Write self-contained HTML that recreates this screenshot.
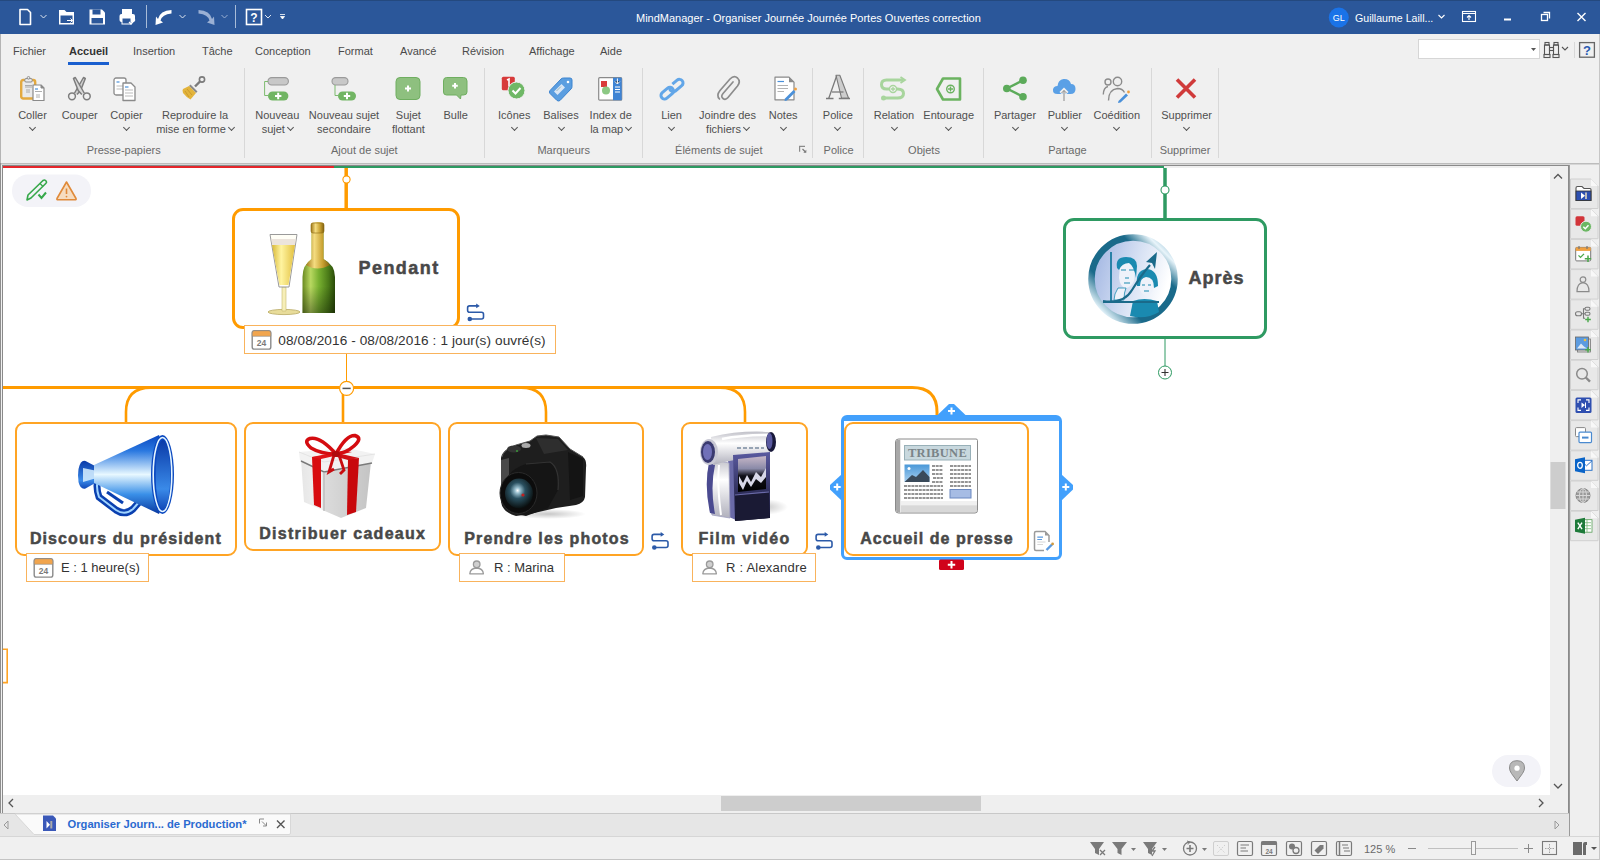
<!DOCTYPE html>
<html><head><meta charset="utf-8">
<style>
*{box-sizing:border-box}
html,body{margin:0;padding:0}
body{width:1600px;height:860px;position:relative;overflow:hidden;background:#f0f0f0;font-family:"Liberation Sans",sans-serif;color:#444}
.a{position:absolute}
svg{position:absolute;overflow:visible}
.tb{position:absolute;left:0;top:0;width:1600px;height:34px;background:#2b579a}
.tab{position:absolute;top:45px;font-size:11px;color:#4a4a4a;white-space:nowrap}
.rl{position:absolute;font-size:11px;color:#4f4f4f;white-space:nowrap;text-align:center;line-height:13.5px}
.gl{position:absolute;top:144px;font-size:11px;color:#6a6a6a;white-space:nowrap;text-align:center}
.sep{position:absolute;top:68px;width:1px;height:90px;background:#d8d8d8}
.chev{display:inline-block;width:5px;height:5px;border-right:1px solid #555;border-bottom:1px solid #555;transform:rotate(45deg);margin-left:3px;position:relative;top:-3px}
.node{position:absolute;background:#fff;border:2px solid #ffa424;border-radius:9px}
.nt{position:absolute;font-weight:bold;font-size:16px;color:#484848;white-space:nowrap;-webkit-text-stroke:0.5px #484848}
.call{position:absolute;background:#fff;border:1px solid #f9b35c;height:29px}
.ct{position:absolute;font-size:13px;color:#333;white-space:nowrap}
</style></head><body>

<!-- TITLE BAR -->
<div class="tb"></div>
<div class="a" style="left:636px;top:11.5px;font-size:11px;color:#fff;white-space:nowrap">MindManager - Organiser Journée Journée Portes Ouvertes correction</div>


<div class="a" style="left:1418px;top:39px;width:122px;height:20px;background:#fff;border:1px solid #d6d6d6"></div>
<!-- TITLE BAR ICONS -->
<svg class="a" style="left:0;top:0" width="1600" height="34" viewBox="0 0 1600 34">
 <rect x="0" y="0" width="1600" height="1" fill="#24497f"/>
 <!-- new -->
 <path d="M20 9.5 H27.5 L30.5 12.5 V24.5 H20 Z" fill="none" stroke="#fff" stroke-width="1.6" stroke-linejoin="round"/>
 <path d="M40.5 15 L43.5 18 L46.5 15" fill="none" stroke="#dfe6f0" stroke-width="1"/>
 <!-- open -->
 <path d="M59 10 H64.5 L66.5 12 H74 V24.5 H59 Z" fill="#fff"/>
 <rect x="60.5" y="15.5" width="12" height="7.5" fill="#2b579a"/>
 <path d="M67 20.5 H72.5 M70.5 18.5 L72.5 20.5 L70.5 22.5" fill="none" stroke="#fff" stroke-width="1"/>
 <!-- save -->
 <path d="M89.5 9.5 H102 L105 12.5 V24.5 H89.5 Z" fill="#fff"/>
 <rect x="92.5" y="9.5" width="8" height="5" fill="#2b579a"/>
 <rect x="91.5" y="18" width="11.5" height="5.5" fill="#2b579a"/>
 <!-- print -->
 <rect x="122" y="9" width="10" height="5" fill="#fff"/>
 <rect x="119.5" y="14" width="15.5" height="8" rx="2" fill="#fff"/>
 <rect x="122" y="18" width="9" height="6" fill="#2b579a" stroke="#fff" stroke-width="1"/>
 <path d="M129 22 L131 24 L135 19.5" fill="none" stroke="#fff" stroke-width="1.3"/>
 <rect x="146" y="5" width="1" height="23" fill="#a8bcd8"/>
 <!-- undo -->
 <path d="M171.5 10 Q160 10.5 158 19 L156 16.5 L155.5 25 L163 22.5 L160.5 20.5 Q162 14.5 171.5 13.5 Z" fill="#fff"/>
 <path d="M179.5 15 L182.5 18 L185.5 15" fill="none" stroke="#dfe6f0" stroke-width="1"/>
 <!-- redo -->
 <path d="M198.5 10 Q210 10.5 212 19 L214 16.5 L214.5 25 L207 22.5 L209.5 20.5 Q208 14.5 198.5 13.5 Z" fill="#9ab0d4"/>
 <path d="M221.5 15 L224.5 18 L227.5 15" fill="none" stroke="#9ab0d4" stroke-width="1"/>
 <rect x="235" y="5" width="1" height="23" fill="#a8bcd8"/>
 <!-- help -->
 <rect x="246.5" y="9.5" width="15" height="15" fill="none" stroke="#fff" stroke-width="1.6"/>
 <text x="254" y="21.5" font-family="Liberation Sans" font-weight="bold" font-size="12" fill="#fff" text-anchor="middle">?</text>
 <path d="M265 15 L268 18 L271 15" fill="none" stroke="#dfe6f0" stroke-width="1"/>
 <path d="M280 14.5 H285 M280.5 16.5 H284.5 L282.5 19 Z" fill="#fff" stroke="#fff" stroke-width="0.8"/>
 <!-- user -->
 <circle cx="1338.8" cy="17.5" r="10" fill="#1a73e8"/>
 <text x="1338.8" y="21" font-family="Liberation Sans" font-size="9" fill="#fff" text-anchor="middle">GL</text>
 <text x="1355" y="22" font-family="Liberation Sans" font-size="10.6" fill="#fff">Guillaume Laill...</text>
 <path d="M1438.5 15 L1441.5 18 L1444.5 15" fill="none" stroke="#fff" stroke-width="1.1"/>
 <rect x="1462.5" y="11.5" width="13" height="10" fill="none" stroke="#fff" stroke-width="1.1"/>
 <path d="M1462.5 13.5 H1475.5" stroke="#fff" stroke-width="1"/>
 <path d="M1469 20 V15.5 M1467 17.5 L1469 15.5 L1471 17.5" fill="none" stroke="#fff" stroke-width="1.1"/>
 <rect x="1504" y="18.5" width="7" height="2" fill="#fff"/>
 <rect x="1541.5" y="14.5" width="6" height="6" fill="none" stroke="#fff" stroke-width="1.3"/>
 <path d="M1543.5 12.5 H1549.5 V18.5" fill="none" stroke="#fff" stroke-width="1.3"/>
 <path d="M1577.5 13 L1585.5 21 M1585.5 13 L1577.5 21" stroke="#fff" stroke-width="1.4"/>
</svg>
<!-- search & help right -->
<svg class="a" style="left:0;top:34px" width="1600" height="30" viewBox="0 34 1600 30">
 <path d="M1531 48 H1536 L1533.5 51 Z" fill="#555"/>
 <g fill="none" stroke="#555" stroke-width="1.1">
  <rect x="1545" y="42.5" width="4" height="2.5"/><rect x="1554" y="42.5" width="4" height="2.5"/>
  <rect x="1544.5" y="45" width="5" height="9.5"/><rect x="1553.5" y="45" width="5" height="9.5"/>
  <rect x="1544" y="54.5" width="6" height="3"/><rect x="1553" y="54.5" width="6" height="3"/>
  <rect x="1549.5" y="47.5" width="4" height="3"/>
 </g>
 <path d="M1562 47 L1565 50 L1568 47" fill="none" stroke="#555" stroke-width="1.1"/>
 <rect x="1574" y="42" width="1" height="16" fill="#d8d8d8"/>
 <rect x="1579.6" y="42.6" width="14.8" height="14.6" fill="none" stroke="#666" stroke-width="1.3"/>
 <text x="1587" y="54.5" font-family="Liberation Sans" font-weight="bold" font-size="13" fill="#2a5ab0" text-anchor="middle">?</text>
</svg>

<!-- TABS -->
<div class="tab" style="left:13px">Fichier</div>
<div class="tab" style="left:69px;font-weight:bold;color:#333">Accueil</div>
<div class="a" style="left:68px;top:62px;width:41px;height:3px;background:#1a5fcf"></div>
<div class="tab" style="left:133px">Insertion</div>
<div class="tab" style="left:202px">Tâche</div>
<div class="tab" style="left:255px">Conception</div>
<div class="tab" style="left:338px">Format</div>
<div class="tab" style="left:400px">Avancé</div>
<div class="tab" style="left:462px">Révision</div>
<div class="tab" style="left:529px">Affichage</div>
<div class="tab" style="left:600px">Aide</div>


<!-- RIBBON LABELS -->
<div class="rl" style="left:-27.5px;top:109px;width:120px">Coller<br><span class="chev" style="margin-left:0"></span></div>
<div class="rl" style="left:19.7px;top:109px;width:120px">Couper</div>
<div class="rl" style="left:66.5px;top:109px;width:120px">Copier<br><span class="chev" style="margin-left:0"></span></div>
<div class="rl" style="left:135.0px;top:109px;width:120px">Reproduire la<br>mise en forme<span class="chev"></span></div>
<div class="rl" style="left:217.3px;top:109px;width:120px">Nouveau<br>sujet<span class="chev"></span></div>
<div class="rl" style="left:284.0px;top:109px;width:120px">Nouveau sujet<br>secondaire</div>
<div class="rl" style="left:348.4px;top:109px;width:120px">Sujet<br>flottant</div>
<div class="rl" style="left:395.7px;top:109px;width:120px">Bulle</div>
<div class="rl" style="left:454.2px;top:109px;width:120px">Icônes<br><span class="chev" style="margin-left:0"></span></div>
<div class="rl" style="left:501.0px;top:109px;width:120px">Balises<br><span class="chev" style="margin-left:0"></span></div>
<div class="rl" style="left:550.7px;top:109px;width:120px">Index de<br>la map<span class="chev"></span></div>
<div class="rl" style="left:611.6px;top:109px;width:120px">Lien<br><span class="chev" style="margin-left:0"></span></div>
<div class="rl" style="left:667.5px;top:109px;width:120px">Joindre des<br>fichiers<span class="chev"></span></div>
<div class="rl" style="left:723.2px;top:109px;width:120px">Notes<br><span class="chev" style="margin-left:0"></span></div>
<div class="rl" style="left:777.8px;top:109px;width:120px">Police<br><span class="chev" style="margin-left:0"></span></div>
<div class="rl" style="left:834.0px;top:109px;width:120px">Relation<br><span class="chev" style="margin-left:0"></span></div>
<div class="rl" style="left:888.7px;top:109px;width:120px">Entourage<br><span class="chev" style="margin-left:0"></span></div>
<div class="rl" style="left:955.0px;top:109px;width:120px">Partager<br><span class="chev" style="margin-left:0"></span></div>
<div class="rl" style="left:1004.8px;top:109px;width:120px">Publier<br><span class="chev" style="margin-left:0"></span></div>
<div class="rl" style="left:1056.8px;top:109px;width:120px">Coédition<br><span class="chev" style="margin-left:0"></span></div>
<div class="rl" style="left:1126.6px;top:109px;width:120px">Supprimer<br><span class="chev" style="margin-left:0"></span></div>
<div class="gl" style="left:63.7px;width:120px">Presse-papiers</div>
<div class="gl" style="left:304.3px;width:120px">Ajout de sujet</div>
<div class="gl" style="left:503.7px;width:120px">Marqueurs</div>
<div class="gl" style="left:658.8px;width:120px">Éléments de sujet</div>
<div class="gl" style="left:778.6px;width:120px">Police</div>
<div class="gl" style="left:864.0px;width:120px">Objets</div>
<div class="gl" style="left:1007.4px;width:120px">Partage</div>
<div class="gl" style="left:1125.0px;width:120px">Supprimer</div>
<div class="sep" style="left:244px"></div>
<div class="sep" style="left:484px"></div>
<div class="sep" style="left:642px"></div>
<div class="sep" style="left:812px"></div>
<div class="sep" style="left:863px"></div>
<div class="sep" style="left:983px"></div>
<div class="sep" style="left:1151px"></div>
<div class="sep" style="left:1218px"></div>

<!-- RIBBON ICONS -->
<svg class="a" style="left:0;top:0" width="1600" height="170" viewBox="0 0 1600 170">
 <!-- Coller -->
 <g transform="translate(20,77)">
  <rect x="1.2" y="3" width="14" height="18.5" rx="2" fill="#eaeaea" stroke="#e3a93f" stroke-width="2.4"/>
  <rect x="4.8" y="1.6" width="7.4" height="3.4" rx="1.2" fill="#ececec" stroke="#8a8a8a" stroke-width="1"/><circle cx="8.5" cy="0.8" r="1.3" fill="#ececec" stroke="#8a8a8a" stroke-width="0.9"/>
  <path d="M5 8.5H12 M5 10H12 M6 13H10 M6 15H10" stroke="#9a9a9a" stroke-width="0.8"/>
  <path d="M13 8 H21 L24 11 V23.5 H13 Z" fill="#fff" stroke="#8a8a8a" stroke-width="1.2" stroke-linejoin="round"/>
  <path d="M21 8 V11 H24" fill="#8a8a8a" stroke="#8a8a8a" stroke-width="1"/>
  <path d="M15 12H18" stroke="#4a90d9" stroke-width="1.2"/>
  <path d="M15 14.5H22 M16 18H20 M16 20H20" stroke="#9a9a9a" stroke-width="0.8"/>
 </g>
 <!-- Couper -->
 <g fill="none" stroke="#7d7d7d" stroke-width="1.5">
  <circle cx="72" cy="96.3" r="3.4"/><circle cx="86.8" cy="96.3" r="3.4"/>
  <path d="M74.3 93.5 L83.5 77.5 L85.3 78.5 L80.6 90.5 L77 94.5" fill="#d0d0d0" stroke-linejoin="round"/>
  <path d="M84.5 93.5 L75.3 77.5 L73.5 78.5 L78.2 90.5 L81.8 94.5" fill="#d8d8d8" stroke-linejoin="round"/>
 </g>
 <!-- Copier -->
 <g transform="translate(113,77)">
  <rect x="1" y="1" width="12" height="17" rx="2" fill="#fff" stroke="#8a8a8a" stroke-width="1.3"/>
  <path d="M3.5 5H6.5" stroke="#4a90d9" stroke-width="1.2"/><path d="M3.5 9H10 M3.5 12H10" stroke="#aaa" stroke-width="0.8"/>
  <path d="M10 6 H18 L22 10 V23.5 H10 Z" fill="#fff" stroke="#8a8a8a" stroke-width="1.3" stroke-linejoin="round"/>
  <path d="M12 10H15.5" stroke="#4a90d9" stroke-width="1.2"/><path d="M12 13H20 M12 16H20 M12 19H20" stroke="#aaa" stroke-width="0.8"/>
 </g>
 <!-- Reproduire -->
 <g transform="translate(181,76)">
  <circle cx="21" cy="3.5" r="2.6" fill="none" stroke="#7b7b7b" stroke-width="1.6"/>
  <path d="M19 5.5 L14 10.5" stroke="#7b7b7b" stroke-width="2.4"/>
  <path d="M9.5 8.5 L16.5 15.5 L15 17 L8 10 Z" fill="#8a8a8a"/>
  <path d="M8 10 L15 17 L9.5 23.5 Q5 21 2 17 Q1 14 2 13 Z" fill="#e3b43b"/>
  <path d="M4 15 L8 21 M6 13 L11 19" stroke="#c4932a" stroke-width="0.8"/>
 </g>
 <!-- Nouveau sujet -->
 <g transform="translate(264,77)">
  <rect x="4" y="0.6" width="20.4" height="7.4" rx="3.7" fill="#c8c8c8" stroke="#9a9a9a" stroke-width="1.1"/>
  <path d="M4 4.5 H0.6 V18.5 H4" fill="none" stroke="#7dbb6f" stroke-width="1"/>
  <rect x="4" y="14.4" width="20.4" height="9.2" rx="4.6" fill="#71b563"/>
  <path d="M14.2 15.8 V22.2 M11 19 H17.4" stroke="#fff" stroke-width="2"/>
 </g>
 <!-- Nouveau sujet secondaire -->
 <g transform="translate(331,77)">
  <rect x="1" y="0.6" width="16" height="7.4" rx="3.7" fill="#c8c8c8" stroke="#9a9a9a" stroke-width="1.1"/>
  <path d="M4 8 V18.5 H7" fill="none" stroke="#7dbb6f" stroke-width="1"/>
  <rect x="7" y="14.4" width="18" height="9.2" rx="4.6" fill="#71b563"/>
  <path d="M16 15.8 V22.2 M12.8 19 H19.2" stroke="#fff" stroke-width="2"/>
 </g>
 <!-- Sujet flottant -->
 <g transform="translate(395.5,77)">
  <rect x="0.5" y="0.5" width="24" height="22" rx="4" fill="#8ec07f" stroke="#6fae60" stroke-width="1"/>
  <path d="M12.5 8.5 V14.5 M9.5 11.5 H15.5" stroke="#fff" stroke-width="2"/>
 </g>
 <!-- Bulle -->
 <g transform="translate(443,77)">
  <path d="M3.5 0.5 H20.5 Q24 0.5 24 4 V15 Q24 18 20.5 18 H18 L17.5 22 L13.5 18 H3.5 Q0.5 18 0.5 15 V4 Q0.5 0.5 3.5 0.5 Z" fill="#8ec07f" stroke="#6fae60" stroke-width="1"/>
  <path d="M12 6 V11.5 M9.2 8.8 H14.8" stroke="#fff" stroke-width="2"/>
 </g>
 <!-- Icones -->
 <g transform="translate(501.5,76.5)">
  <rect x="0.3" y="0.3" width="13" height="13.5" rx="1.5" fill="#d73a3a"/>
  <path d="M5.5 3.5 L7.5 2.5 V10" stroke="#fff" stroke-width="1.6" fill="none"/>
  <circle cx="15" cy="14" r="8.5" fill="#6fb866" stroke="#f0f0f0" stroke-width="1"/>
  <path d="M11 14 L14 17 L19 11.5" stroke="#fff" stroke-width="2" fill="none"/>
 </g>
 <!-- Balises -->
 <g transform="translate(548,76.5)">
  <path d="M2 14 L13 2.5 Q14 1.5 15.5 1.5 L22 1.5 Q24 1.5 24 3.5 L24 10 Q24 11.5 23 12.5 L12 24 Q10.5 25 9 24 L2 17 Q0.8 15.5 2 14 Z" fill="#5b9ee0" stroke="#3d84cf" stroke-width="1"/>
  <path d="M6 15 L13.5 7.5 L17 11 L9.5 18.5 Z" fill="#d9e6f5"/>
  <path d="M8.5 14.5 L13 10" stroke="#8aa" stroke-width="0.8"/>
  <circle cx="20" cy="5.5" r="1.3" fill="#fff"/>
 </g>
 <!-- Index map -->
 <g transform="translate(598,77)">
  <rect x="0.7" y="0.7" width="23" height="22.5" rx="1" fill="#fff" stroke="#8a8a8a" stroke-width="1.2"/>
  <rect x="15" y="0.7" width="8.7" height="22.5" fill="#3f84d4"/>
  <rect x="3" y="4" width="6" height="6" fill="#d93b3b"/>
  <circle cx="8" cy="13.5" r="4" fill="#8cc884"/>
  <path d="M19.4 1.5 V7 M17 4.5 L19.4 7 L21.8 4.5 M17 10H22 M17 12.5H22 M17 15H22" stroke="#fff" stroke-width="1"/>
 </g>
 <!-- Lien -->
 <g transform="translate(672,89.2) rotate(-40)" fill="none" stroke="#62a6e8" stroke-width="3">
  <rect x="-13.3" y="-3.6" width="14.2" height="7.2" rx="3.6"/>
  <path d="M3.5 -3.6 H9.7 A3.6 3.6 0 0 1 9.7 3.6 H1.5 A3.6 3.6 0 0 1 -0.9 -2.4"/>
 </g>
 <!-- Joindre -->
 <g transform="translate(716,76)" fill="none" stroke="#8c8c8c" stroke-width="1.7" stroke-linecap="round">
  <path d="M17 6 L7 17.5 Q4.5 20.5 7 22.5 Q9.5 24.5 12 21.5 L21.5 10 Q25 5.5 21.5 2 Q18 -1 14 3 L4 14.5 Q0 19.5 3.5 23"/>
 </g>
 <!-- Notes -->
 <g transform="translate(774,76.5)">
  <path d="M1 0.7 H15 L20 5.7 V23.3 H1 Z" fill="#fff" stroke="#8a8a8a" stroke-width="1.2" stroke-linejoin="round"/>
  <path d="M15 0.7 V5.7 H20" fill="#8a8a8a"/>
  <path d="M3.5 5 H10" stroke="#4a90d9" stroke-width="1.2"/>
  <path d="M3.5 9 H14 M3.5 12 H14 M3.5 15 H10" stroke="#aaa" stroke-width="0.9"/>
  <path d="M11 22 L19.5 13.5 L21.5 15.5 L13 24 L10.5 24.5 Z" fill="#4a90d9"/>
  <circle cx="21.5" cy="12.5" r="1.5" fill="#f0a040"/>
 </g>
 <!-- Police -->
 <g>
  <path d="M836 75.3 H839.8 L848.6 98.3 H841.6 Z" fill="#cdcdcd" stroke="#7a7a7a" stroke-width="1.1" stroke-linejoin="round"/>
  <path d="M836.6 76 L828.8 98.3" stroke="#7a7a7a" stroke-width="1.3"/>
  <path d="M832 92 H843.5" stroke="#7a7a7a" stroke-width="1.3"/>
  <path d="M826 98.5 H833.5 M838.8 98.5 H850" stroke="#7a7a7a" stroke-width="1.6"/>
 </g>
 <!-- Relation -->
 <g transform="translate(879.5,77)" fill="none" stroke="#a8d59d" stroke-width="3">
  <path d="M24 3 H7 Q2 3 2 7.5 Q2 12 7 12 H18 Q24 12 24 16.5 Q24 21 18 21 H5"/>
  <path d="M21 0 L25.5 3 L21 6" stroke-width="1.8"/>
  <circle cx="4" cy="21" r="2.5" fill="#a8d59d" stroke="none"/>
  <circle cx="13.5" cy="12" r="3.5" fill="#f0f0f0" stroke="#a8d59d" stroke-width="1.4"/>
  <path d="M13.5 10 V14 M11.5 12 H15.5" stroke="#a8d59d" stroke-width="1.3"/>
 </g>
 <!-- Entourage -->
 <g transform="translate(935.5,77)">
  <path d="M7.5 1.5 H24.5 V22.5 H7.5 L1.5 12 Z" fill="none" stroke="#6bb360" stroke-width="2.6" stroke-linejoin="round"/>
  <circle cx="15" cy="12" r="3.8" fill="none" stroke="#6bb360" stroke-width="1.4"/>
  <path d="M15 9.5 V14.5 M12.5 12 H17.5" stroke="#6bb360" stroke-width="1.4"/>
 </g>
 <!-- Partager -->
 <g transform="translate(1003,76.5)" fill="#5cab5a">
  <circle cx="3.8" cy="12" r="3.8"/><circle cx="20" cy="3.8" r="3.8"/><circle cx="20" cy="20.2" r="3.8"/>
  <path d="M3.8 12 L20 3.8 M3.8 12 L20 20.2" stroke="#5cab5a" stroke-width="2.4"/>
 </g>
 <!-- Publier -->
 <g transform="translate(1052.5,77)">
  <path d="M5 17 Q0 17 0.5 12.5 Q1 9 5 9 Q5.5 3 11 2 Q17 1.5 18.5 7 Q23 7 23 12 Q23 17 18 17 Z" fill="#5aa0e6"/>
  <path d="M11.5 25 V13 M8 16 L11.5 12.5 L15 16" fill="none" stroke="#f0f0f0" stroke-width="3"/>
  <path d="M11.5 24 V13.5 M9 16 L11.5 13.5 L14 16" fill="none" stroke="#888" stroke-width="1"/>
 </g>
 <!-- Coedition -->
 <g transform="translate(1102.5,76.5)" fill="none" stroke="#8c8c8c" stroke-width="1.4">
  <circle cx="5.5" cy="5.5" r="3"/><circle cx="15" cy="5" r="4.2"/>
  <path d="M0.8 18 Q1 11 5.5 10"/><path d="M6 24 Q6 13 15 12 Q20 12 22 16"/>
  <path d="M16 24.5 L23.5 17 L25.5 19 L18 26 L15.5 26.5 Z" fill="#4a90d9" stroke="none"/>
  <circle cx="26" cy="15.5" r="1.4" fill="#f0a040" stroke="none"/>
 </g>
 <!-- Supprimer -->
 <g transform="translate(1175.5,78)" stroke="#d03a3a" stroke-width="3.6" stroke-linecap="butt">
  <path d="M1.5 1.5 L19.5 19.5 M19.5 1.5 L1.5 19.5"/>
 </g>
 <!-- launcher -->
 <path d="M805 146.3 H799.6 V151.8" fill="none" stroke="#8a8a8a" stroke-width="1.2"/>
 <path d="M802.5 149 L805.5 152" stroke="#7a7a7a" stroke-width="1.3"/>
 <path d="M806.3 149.8 V152.8 H803.3 Z" fill="#7a7a7a"/>
</svg>
<!-- search box -->


<!-- RIBBON bottom border -->
<div class="a" style="left:0;top:163px;width:1600px;height:1px;background:#bcbcbc"></div><div class="a" style="left:0;top:164px;width:1600px;height:1px;background:#d6d6d6"></div>
<div class="a" style="left:0;top:34px;width:1px;height:129px;background:#b4b4b4"></div><div class="a" style="left:0;top:163px;width:1px;height:650px;background:#8e8e8e"></div>

<!-- CANVAS -->
<div class="a" style="left:2px;top:165px;width:1567px;height:649px;background:#8a8a8a"></div>
<div class="a" style="left:3px;top:166px;width:1565px;height:647px;background:#efefef"></div>
<div class="a" id="canvas" style="left:3px;top:168px;width:1547px;height:627px;background:#fff;overflow:hidden"></div>


<!-- CANVAS CONTENT -->
<svg class="a" style="left:0;top:0" width="1600" height="860" viewBox="0 0 1600 860">
 <defs>
  <linearGradient id="gGlass" x1="0" x2="1"><stop offset="0" stop-color="#e9d36a"/><stop offset="0.45" stop-color="#fff7b8"/><stop offset="1" stop-color="#d9b93a"/></linearGradient>
  <linearGradient id="gBottle" x1="0" x2="1"><stop offset="0" stop-color="#2f5a14"/><stop offset="0.35" stop-color="#9cc450"/><stop offset="0.6" stop-color="#5e8f22"/><stop offset="1" stop-color="#2a4a10"/></linearGradient>
  <linearGradient id="gFoil" x1="0" x2="1"><stop offset="0" stop-color="#8a6a20"/><stop offset="0.4" stop-color="#f0d27a"/><stop offset="1" stop-color="#7a5a18"/></linearGradient>
  <linearGradient id="gCone" x1="0" y1="0" x2="0" y2="1"><stop offset="0" stop-color="#0a4fc0"/><stop offset="0.45" stop-color="#e6f4ff"/><stop offset="0.75" stop-color="#4aa0f0"/><stop offset="1" stop-color="#0a3fa0"/></linearGradient>
  <radialGradient id="gMouth" cx="0.5" cy="0.5" r="0.5"><stop offset="0" stop-color="#3a8ae6"/><stop offset="1" stop-color="#0a3a9a"/></radialGradient>
  <linearGradient id="gBox" x1="0" x2="1"><stop offset="0" stop-color="#d8d8d8"/><stop offset="0.5" stop-color="#f4f4f4"/><stop offset="1" stop-color="#c8c8c8"/></linearGradient>
  <radialGradient id="gLens" cx="0.4" cy="0.4" r="0.6"><stop offset="0" stop-color="#9fc6d8"/><stop offset="0.4" stop-color="#2a5a6a"/><stop offset="1" stop-color="#0a1418"/></radialGradient>
  <linearGradient id="gCam" x1="0" x2="1"><stop offset="0" stop-color="#3a3a3a"/><stop offset="0.5" stop-color="#1a1a1a"/><stop offset="1" stop-color="#0a0a0a"/></linearGradient>
  <linearGradient id="gSilver" x1="0" y1="0" x2="0" y2="1"><stop offset="0" stop-color="#b8b8c0"/><stop offset="0.4" stop-color="#ffffff"/><stop offset="1" stop-color="#a0a0aa"/></linearGradient>
  <linearGradient id="gPurple" x1="0" y1="0" x2="0" y2="1"><stop offset="0" stop-color="#6a6aa8"/><stop offset="1" stop-color="#1a1a40"/></linearGradient>
  <linearGradient id="gPaper" x1="0" y1="0" x2="0" y2="1"><stop offset="0" stop-color="#ffffff"/><stop offset="0.85" stop-color="#f4f4f4"/><stop offset="1" stop-color="#b8b8b8"/></linearGradient>
  <radialGradient id="gApres" cx="0.65" cy="0.35" r="0.7"><stop offset="0" stop-color="#ffffff"/><stop offset="0.5" stop-color="#c6d8f0"/><stop offset="1" stop-color="#8aaee0"/></radialGradient>
  <linearGradient id="gRing" x1="0" y1="0" x2="1" y2="1"><stop offset="0" stop-color="#1a6a90"/><stop offset="0.35" stop-color="#2a7aa0"/><stop offset="0.55" stop-color="#e8f4ff"/><stop offset="0.8" stop-color="#1a6a90"/><stop offset="1" stop-color="#0a4a70"/></linearGradient>
 </defs>

 <!-- top lines -->
 <rect x="3" y="166" width="331" height="2" fill="#e4262b"/>
 <rect x="334" y="166" width="830" height="2" fill="#2e9a62"/>

 <!-- Pendant connector -->
 <path d="M346.2 168 V209" stroke="#ff9b00" stroke-width="3.5"/>
 <circle cx="346.5" cy="179.5" r="3.6" fill="#fff" stroke="#ff9b00" stroke-width="1.1"/>
 <path d="M346.5 354 V381" stroke="#ff9b00" stroke-width="1"/>

 <!-- Apres connector -->
 <path d="M1165 168 V220" stroke="#2e9a62" stroke-width="3.5"/>
 <circle cx="1165" cy="190" r="4" fill="#fff" stroke="#2e9a62" stroke-width="1.1"/>
 <path d="M1165 339 V366" stroke="#2e9a62" stroke-width="1"/>
 <circle cx="1165" cy="372.5" r="6.5" fill="#fff" stroke="#2e9a62" stroke-width="1"/>
 <path d="M1165 369 V376 M1161.5 372.5 H1168.5" stroke="#333" stroke-width="1.1"/>

 <!-- main horizontal -->
 <path d="M3 387.6 H912 Q937 387.6 937 412 V416" fill="none" stroke="#ff9b00" stroke-width="3"/>
 <path d="M151 387.6 Q126 387.6 126 412 V423" fill="none" stroke="#ff9b00" stroke-width="2.6"/>
 <path d="M521 387.6 Q546 387.6 546 412 V423" fill="none" stroke="#ff9b00" stroke-width="2.6"/>
 <path d="M720 387.6 Q745 387.6 745 412 V423" fill="none" stroke="#ff9b00" stroke-width="2.6"/>
 <path d="M343 392 V423" stroke="#ff9b00" stroke-width="2.6"/>
 <circle cx="346.6" cy="388.4" r="7" fill="#fff" stroke="#ff9b00" stroke-width="1.2"/>
 <path d="M342.5 388.4 H350.7" stroke="#555" stroke-width="1.5"/>

 <!-- left offscreen node edge -->
 <path d="M3 649.2 H7.2 V682.6 H3" fill="none" stroke="#ffa424" stroke-width="1.6"/>
</svg>

<!-- NODES -->
<div class="node" style="left:232px;top:208px;width:228px;height:121px;border-width:3px;border-radius:11px;border-color:#ff9b00"></div>
<div class="node" style="left:1063px;top:218px;width:204px;height:121px;border-width:3px;border-radius:11px;border-color:#2e9a62"></div>
<div class="node" style="left:15px;top:422px;width:222px;height:134px"></div>
<div class="node" style="left:244px;top:422px;width:197px;height:129px"></div>
<div class="node" style="left:448px;top:422px;width:196px;height:134px"></div>
<div class="node" style="left:681px;top:422px;width:127px;height:134px"></div>
<!-- selection frame -->
<div class="a" style="left:841px;top:414.5px;width:221px;height:145px;border:3px solid #42a0fc;border-top-width:6px;border-radius:6px"></div>
<div class="node" style="left:844px;top:421.5px;width:185px;height:134.5px"></div>

<div class="nt" style="left:358.5px;top:258.4px;font-size:18px;letter-spacing:1.45px">Pendant</div>
<div class="nt" style="left:1188.6px;top:268.3px;font-size:18px;letter-spacing:1.0px">Après</div>
<div class="nt" style="left:29.9px;top:530.3px;letter-spacing:1.1px">Discours du président</div>
<div class="nt" style="left:259.3px;top:524.6px;letter-spacing:1.27px">Distribuer cadeaux</div>
<div class="nt" style="left:464.2px;top:529.6px;letter-spacing:1.15px">Prendre les photos</div>
<div class="nt" style="left:698.5px;top:529.6px;letter-spacing:1.3px">Film vidéo</div>
<div class="nt" style="left:860.2px;top:529.7px;letter-spacing:1.02px">Accueil de presse</div>


<!-- NODE IMAGES -->
<svg class="a" style="left:0;top:0" width="1600" height="860" viewBox="0 0 1600 860">
 <defs>
  <linearGradient id="gGl" x1="0" x2="1"><stop offset="0" stop-color="#d8b838"/><stop offset="0.4" stop-color="#fff4a0"/><stop offset="1" stop-color="#e2c040"/></linearGradient>
  <linearGradient id="gBt" x1="0" x2="1"><stop offset="0" stop-color="#6a8a20"/><stop offset="0.25" stop-color="#b8d860"/><stop offset="0.5" stop-color="#78b030"/><stop offset="0.8" stop-color="#4a7a18"/><stop offset="1" stop-color="#2a4a08"/></linearGradient>
  <linearGradient id="gBtV" x1="0" y1="0" x2="0" y2="1"><stop offset="0" stop-color="#000" stop-opacity="0"/><stop offset="0.7" stop-color="#000" stop-opacity="0"/><stop offset="1" stop-color="#000" stop-opacity="0.35"/></linearGradient>
  <linearGradient id="gFl" x1="0" x2="1"><stop offset="0" stop-color="#a07818"/><stop offset="0.35" stop-color="#f4dc80"/><stop offset="0.7" stop-color="#c8a030"/><stop offset="1" stop-color="#806010"/></linearGradient>
  <linearGradient id="gCn" x1="0" y1="0" x2="0" y2="1"><stop offset="0" stop-color="#0a48c0"/><stop offset="0.2" stop-color="#2a78e0"/><stop offset="0.5" stop-color="#e8f8ff"/><stop offset="0.75" stop-color="#3a90e8"/><stop offset="1" stop-color="#0838a0"/></linearGradient>
  <linearGradient id="gMo" x1="0" y1="0" x2="0" y2="1"><stop offset="0" stop-color="#0a3aa8"/><stop offset="0.7" stop-color="#3a8ae8"/><stop offset="1" stop-color="#1048b8"/></linearGradient>
  <linearGradient id="gBx" x1="0" x2="1"><stop offset="0" stop-color="#e6e6e6"/><stop offset="0.3" stop-color="#f2f2f2"/><stop offset="0.32" stop-color="#dcdcdc"/><stop offset="1" stop-color="#c4c4c4"/></linearGradient>
  <radialGradient id="gLn" cx="0.45" cy="0.4" r="0.6"><stop offset="0" stop-color="#ffffff"/><stop offset="0.15" stop-color="#9ac0d0"/><stop offset="0.45" stop-color="#2a5060"/><stop offset="1" stop-color="#0a1010"/></radialGradient>
  <linearGradient id="gSv" x1="0" y1="0" x2="0" y2="1"><stop offset="0" stop-color="#c0c0c8"/><stop offset="0.35" stop-color="#ffffff"/><stop offset="1" stop-color="#b0b0bc"/></linearGradient>
  <linearGradient id="gPu" x1="0" y1="0" x2="0" y2="1"><stop offset="0" stop-color="#5a5aa0"/><stop offset="1" stop-color="#10102a"/></linearGradient>
  <linearGradient id="gSc" x1="0" y1="0" x2="0" y2="1"><stop offset="0" stop-color="#c8b8c8"/><stop offset="0.35" stop-color="#8a8aa8"/><stop offset="0.55" stop-color="#101018"/><stop offset="1" stop-color="#000"/></linearGradient>
  <linearGradient id="gPp" x1="0" y1="0" x2="0" y2="1"><stop offset="0" stop-color="#fff"/><stop offset="0.82" stop-color="#f6f6f6"/><stop offset="1" stop-color="#9a9a9a"/></linearGradient>
  <linearGradient id="gSky" x1="0" y1="0" x2="0" y2="1"><stop offset="0" stop-color="#4a98d8"/><stop offset="1" stop-color="#a8d0f0"/></linearGradient>
  <linearGradient id="gIn" x1="0" y1="0" x2="1" y2="0.3"><stop offset="0" stop-color="#9ab0e0"/><stop offset="0.6" stop-color="#d8e2f4"/><stop offset="1" stop-color="#ffffff"/></linearGradient>
  <linearGradient id="gRg" x1="0" y1="1" x2="1" y2="0"><stop offset="0" stop-color="#2a7a98"/><stop offset="0.12" stop-color="#e0f0f8"/><stop offset="0.3" stop-color="#1a6a8a"/><stop offset="0.7" stop-color="#1a6a8a"/><stop offset="0.85" stop-color="#e8f4fa"/><stop offset="1" stop-color="#5a9ab8"/></linearGradient>
  <radialGradient id="gShd" cx="0.5" cy="0.5" r="0.5"><stop offset="0" stop-color="#000" stop-opacity="0.22"/><stop offset="1" stop-color="#000" stop-opacity="0"/></radialGradient>
 </defs>

 <!-- champagne -->
 <g transform="translate(260,215)">
  <ellipse cx="24" cy="97" rx="16" ry="2.6" fill="#e8dc9a" stroke="#b8a860" stroke-width="0.8"/>
  <path d="M22 72 H26 V96 H22 Z" fill="#f6eeb8" stroke="#c8b870" stroke-width="0.6"/>
  <path d="M10 19.5 H37 L29 72 H19 Z" fill="#fffef6" stroke="#9a9a9a" stroke-width="1"/>
  <path d="M12 30 H35 L28.5 70 H19.5 Z" fill="url(#gGl)"/>
  <path d="M11.5 24 H35.5 L35 30 H12 Z" fill="#ece4dc"/>
  <!-- bottle -->
  <path d="M51.5 9 H63.5 V44 Q75 50 75 62 V98 H42.5 V62 Q42.5 50 51.5 44 Z" fill="url(#gBt)"/>
  <path d="M51.5 9 H63.5 V44 Q75 50 75 62 V98 H42.5 V62 Q42.5 50 51.5 44 Z" fill="url(#gBtV)"/>
  <path d="M51.5 8 Q57.5 6 63.5 8 V44 Q68 47 70 50 Q57 57 46 50 Q48 47 51.5 44 Z" fill="url(#gFl)"/>
  <rect x="51" y="8" width="13" height="10" rx="2" fill="url(#gFl)" stroke="#8a6a10" stroke-width="0.6"/>
 </g>

 <!-- megaphone -->
 <g transform="translate(70,428)">
  <path d="M29 47 Q25 58 29 69 L46 82 Q55 88 63 81 L70 73" fill="none" stroke="#0a40b0" stroke-width="7"/>
  <path d="M29 47 Q25 58 29 69 L46 82 Q55 88 63 81 L70 73" fill="none" stroke="#a0d4ff" stroke-width="2"/>
  <path d="M37 64 L53 75" stroke="#0a40b0" stroke-width="3"/>
  <path d="M8.5 41 Q7.5 47 8.5 54 Q10.5 62 15.5 60.5 L27 54 V39 L15.5 33 Q10.5 31.5 8.5 41 Z" fill="url(#gMo)"/>
  <path d="M13 40 L25 42.5 V50.5 L13 54 Z" fill="#d8f0ff" opacity="0.85"/>
  <path d="M24 37 L89 7 Q106 46 89 86 L24 55 Z" fill="url(#gCn)"/>
  <ellipse cx="92.5" cy="46.5" rx="11.5" ry="39.5" fill="#0a48c0"/>
  <ellipse cx="92.5" cy="46.5" rx="9.3" ry="37" fill="none" stroke="#e6f6ff" stroke-width="1.6"/>
  <ellipse cx="93" cy="47" rx="7.3" ry="35" fill="url(#gMo)"/>
 </g>

 <!-- gift -->
 <g transform="translate(290,428)">
  <path d="M11 31 L34 43 L81 34 L76 80 L51 90 L14 74 Z" fill="url(#gBx)"/>
  <path d="M9 24 L57 20 L85 26 L82 35 L34 44 L10 33 Z" fill="#f2f2f2"/>
  <path d="M9 24 L34 34 L85 26" fill="none" stroke="#e0e0e0" stroke-width="0.8"/>
  <path d="M11 33 L34 44 L82 35" fill="none" stroke="#7a7a7a" stroke-width="1.4"/>
  <path d="M34 44 V83" stroke="#b0b0b0" stroke-width="1"/>
  <path d="M22 29 L31 28 L31 80 L24 77 Z" fill="#d80c10"/>
  <path d="M58 31 L69 30 L66 84 L57 87 Z" fill="#c8080c"/>
  <path d="M22 29 L52 23 L62 24 L31 31 Z" fill="#e01418"/>
  <path d="M47 25 L69 30 L58 32 L40 27 Z" fill="#d01014"/>
  <path d="M46 26 Q30 8 20 10.5 Q13 13 21 20 Q31 26 46 26 Z" fill="none" stroke="#d40c10" stroke-width="3.6"/>
  <path d="M46 26 Q56 7 65 7.5 Q73 10 64 18 Q56 25 46 26 Z" fill="none" stroke="#d40c10" stroke-width="3.6"/>
  <path d="M44 27 L39 44 L44 41 M49 27 L54 42 L50 46" fill="none" stroke="#c80c10" stroke-width="2.8"/>
  <ellipse cx="46" cy="26" rx="4" ry="3" fill="#b00a0c"/>
 </g>

 <!-- camera -->
 <g transform="translate(490,428)">
  <ellipse cx="58" cy="86" rx="38" ry="5" fill="url(#gShd)"/>
  <path d="M11 30 Q12 22 26 17 L40 13 L47 8 L56 7 L69 9 L80 21 L93 29 Q97 32 96 40 L95 69 Q94 75 86 77 L66 80 L40 86 L26 88 Q12 84 11 74 Z" fill="#1e1e1e"/>
  <path d="M12 29 Q13 22 26 17 L40 13 L47 8 L56 7 L69 9 L80 21 L93 29" fill="none" stroke="#555" stroke-width="1"/>
  <path d="M46 10 L68 11 L78 22 L54 26 Z" fill="#2e2e2e"/>
  <path d="M11 32 L19 30 V70 L11 68 Z" fill="#4a4a4a"/>
  <path d="M78 24 L93 31 V68 L80 72 Z" fill="#141414"/>
  <ellipse cx="36" cy="17.5" rx="4.5" ry="2.5" fill="#aaa"/>
  <ellipse cx="24" cy="21" rx="7" ry="3.5" fill="#333"/>
  <ellipse cx="27" cy="23" r="1" rx="1" ry="1" fill="#3a9a3a"/>
  <path d="M14 60 Q16 42 36 36 L60 34 Q70 40 68 62 L58 80 L36 88 Q18 86 14 70 Z" fill="#151515"/>
  <path d="M36 36 L60 34 Q70 40 68 62" fill="none" stroke="#333" stroke-width="1.2"/>
  <ellipse cx="28.5" cy="65" rx="18.5" ry="20.5" fill="#0c0c0c" stroke="#2a2a2a" stroke-width="1"/>
  <ellipse cx="29" cy="65.5" rx="14" ry="15" fill="url(#gLn)"/>
  <circle cx="33" cy="67" r="1.6" fill="#c02020"/>
 </g>

 <!-- camcorder -->
 <g transform="translate(692,425)">
  <ellipse cx="72" cy="82" rx="24" ry="8" fill="url(#gShd)"/>
  <path d="M36 34 L44 30 V95 L37 92 Z" fill="#6a6aa8"/>
  <path d="M18 34 Q13 60 20 90 L38 93 L37 38 Z" fill="url(#gSv)" stroke="#a0a0c0" stroke-width="0.8"/>
  <path d="M17 38 Q12 60 18 88 L23 89 Q18 62 23 40 Z" fill="#4a4a90"/>
  <path d="M27 40 Q25 60 29 90" stroke="#fff" stroke-width="2" fill="none"/>
  <path d="M19 12 Q48 5 78 7 L78 31 Q50 32 21 40 Z" fill="url(#gSv)"/>
  <path d="M30 14 Q50 10 76 10" stroke="#fff" stroke-width="2.5" fill="none"/>
  <ellipse cx="79" cy="17" rx="5" ry="10" fill="#18183a"/>
  <ellipse cx="77.5" cy="16" rx="3" ry="8" fill="#5a5aa0"/>
  <ellipse cx="17" cy="27" rx="9" ry="13" fill="#c8c8d4"/>
  <ellipse cx="16" cy="27" rx="7" ry="11" fill="#3a3a70"/>
  <ellipse cx="15.5" cy="27" rx="4.5" ry="8" fill="#7070b8"/>
  <path d="M41 30 L78 27 V93 L43 96 Z" fill="url(#gPu)"/>
  <path d="M46 34 L74 31 V64 L46 67 Z" fill="url(#gSc)"/>
  <path d="M47 51 L51 58 L55 50 L59 57 L64 47 L69 52 L74 43 V52 L69 58 L64 54 L59 62 L55 56 L51 65 L47 58 Z" fill="#d8d8e8"/>
  <path d="M43 70 L77 67 V93 L44 96 Z" fill="#1a1a34"/>
  <path d="M43 70 L77 67" stroke="#6a6aa8" stroke-width="1.2"/>
  <path d="M45 23 H72" stroke="#7a8aa0" stroke-width="1.5" stroke-dasharray="4 2"/>
 </g>

 <!-- newspaper -->
 <g transform="translate(888,433)">
  <path d="M7.5 9 Q7.5 6 10.5 6 H88 Q89.5 6 89.5 7.5 V77.5 Q89.5 80 87 80 H10.5 Q7.5 80 7.5 77 Z" fill="#fff" stroke="#8a8a8a" stroke-width="1"/>
  <path d="M12 72 H89 V77.5 Q89 79.5 87 79.5 H12 Z" fill="#b8b8b8" opacity="0.55"/>
  <path d="M12 68 H89 V73 H12 Z" fill="#e6e6e6" opacity="0.6"/>
  <path d="M8 9 Q8 6.5 11 6.5 L12.5 7 V79.5 L10.5 79.5 Q8 79 8 77 Z" fill="#a8a8a8"/>
  <path d="M12.5 7 V79.5" stroke="#e8e8e8" stroke-width="1"/>
  <rect x="16.5" y="12.5" width="66" height="14.5" fill="#c8d8de" stroke="#98b0b8" stroke-width="1"/>
  <text x="49.5" y="24" font-family="Liberation Serif" font-weight="bold" font-size="12.5" fill="#7a8488" text-anchor="middle" letter-spacing="0.3">TRIBUNE</text>
  <rect x="16.5" y="31.5" width="25" height="17.5" fill="url(#gSky)"/>
  <path d="M16.5 49 L24 42 L28 44 L35 37 L41.5 44 V49 Z" fill="#3a4a5a"/>
  <circle cx="21" cy="35.5" r="1.5" fill="#fff"/>
  <g stroke="#2a2a2a" stroke-width="1.1" stroke-dasharray="3 0.7">
   <path d="M44 33 H55 M44 37 H55 M44 41 H55 M45 45 H55 M44 49 H55 M16 53 H55 M16 57 H55 M16 61 H55 M16 65 H55 M62 33 H83 M62 37 H83 M62 41 H83 M62 45 H83 M62 49 H83 M62 53 H83"/>
  </g>
  <rect x="62" y="56.5" width="21" height="8.5" fill="#a6bce4" stroke="#6a88c0" stroke-width="1"/>
 </g>

 <!-- apres image -->
 <g transform="translate(1084,230)">
  <circle cx="49" cy="49" r="41" fill="url(#gIn)"/>
  <circle cx="49" cy="49" r="41.5" fill="none" stroke="url(#gRg)" stroke-width="6.5"/>
  <path d="M27 22 V71" stroke="#1a7aa0" stroke-width="1.8"/>
  <path d="M36 34 Q37 29 44 29 Q51 30 51 38 L50 51 Q47 58 41 58 Q36 56 35 48 Z" fill="#eef2fa"/>
  <path d="M33 38 Q31 27 42 27 Q53 27 53 36 L52 48 Q50 36 45 33 Q38 33 35 40 Z" fill="#1a8ab0"/>
  <path d="M37 40 H42 M45 40 H50 M41 48 H45 M40 53 H46" stroke="#1a8ab0" stroke-width="1"/>
  <path d="M34 58 Q30 64 30 70 L40 70 Q40 62 42 58 Z" fill="#eef2fa" stroke="#1a8ab0" stroke-width="0.8"/>
  <path d="M55 52 Q56 45 63 45 Q70 46 70 54 Q70 63 63 66 Q56 64 55 56 Z" fill="#eef2fa"/>
  <path d="M53 56 Q51 41 62 39 Q74 39 74 56 L70 58 Q70 47 62 47 Q56 48 56 56 Z" fill="#1a8ab0"/>
  <path d="M58 55 H61 M64 55 H67 M60 61 H65" stroke="#1a8ab0" stroke-width="1"/>
  <path d="M46 86 L49 71 Q60 67 73 71 L75 82 Q62 90 46 86 Z" fill="#1a8ab0"/>
  <path d="M19 71 Q40 74 48 60 Q58 44 66 35" fill="none" stroke="#1a6a8a" stroke-width="2.2"/>
  <path d="M75 72 H19" stroke="#1a6a8a" stroke-width="2"/>
  <path d="M73 22 L62 32 L68 33 L71 39 Z" fill="#1a6a8a"/>
 </g>
</svg>

<!-- callouts -->
<div class="call" style="left:244px;top:325px;width:312px"></div>
<div class="ct" style="left:278.3px;top:332.5px;font-size:13.6px;letter-spacing:0.1px">08/08/2016 - 08/08/2016 : 1 jour(s) ouvré(s)</div>
<div class="call" style="left:26px;top:553px;width:123px"></div>
<div class="ct" style="left:61px;top:560px">E : 1 heure(s)</div>
<div class="call" style="left:459px;top:553px;width:106px"></div>
<div class="ct" style="left:494px;top:560px">R : Marina</div>
<div class="call" style="left:692px;top:553px;width:124px"></div>
<div class="ct" style="left:726px;top:560px;letter-spacing:0.22px">R : Alexandre</div>


<!-- SMALL CANVAS ICONS -->
<svg class="a" style="left:0;top:0" width="1600" height="860" viewBox="0 0 1600 860">
 <defs>
  <g id="rel">
   <path d="M17 5.9 H9.6 Q7.6 5.9 7.6 7.9 V10.2 Q7.6 12.2 9.6 12.2 H21.5 Q23.5 12.2 23.5 14.2 V17 Q23.5 19 21.5 19 H10" fill="none" stroke="#2c5aa8" stroke-width="1.6"/>
   <path d="M16.2 3.6 L19.8 5.9 L16.2 8.2 Z" fill="#2c5aa8"/>
   <circle cx="9.8" cy="19" r="2.3" fill="#2c5aa8"/>
  </g>
  <g id="cal">
   <rect x="8.2" y="8.7" width="18.6" height="18.4" rx="2.2" fill="#fff" stroke="#8a8a8a" stroke-width="1.4"/>
   <path d="M8.2 14.3 V10.9 Q8.2 8.7 10.4 8.7 H24.6 Q26.8 8.7 26.8 10.9 V14.3 Z" fill="#f1a54e" stroke="#8a8a8a" stroke-width="0.6"/>
   <text x="17.4" y="24.3" font-family="Liberation Sans" font-weight="bold" font-size="8.5" fill="#7a7a7a" text-anchor="middle">24</text>
  </g>
  <g id="per">
   <circle cx="17.7" cy="12.3" r="3.3" fill="#cfcfcf" stroke="#9a9a9a" stroke-width="1.3"/>
   <path d="M10.8 21.8 Q11.2 16.2 17.6 16 Q24 16.2 24.4 21.8 Z" fill="#fff" stroke="#9a9a9a" stroke-width="1.3" stroke-linejoin="round"/>
  </g>
 </defs>
 <use href="#rel" x="460" y="300"/>
 <use href="#rel" x="644.5" y="528.5"/>
 <use href="#rel" x="808.5" y="528.5"/>
 <use href="#cal" x="244" y="322"/>
 <use href="#cal" x="26" y="550"/>
 <use href="#per" x="459" y="552"/>
 <use href="#per" x="692" y="552"/>
 <!-- notes icon -->
 <g transform="translate(1028,526)">
  <path d="M8 5.5 H17 L21 9.5 V16" fill="none" stroke="#9a9a9a" stroke-width="1.5"/>
  <path d="M17 5.5 V9.5 H21 Z" fill="#9a9a9a"/>
  <path d="M8 5.5 Q6.5 5.5 6.5 7 V23 Q6.5 24.5 8 24.5 H16" fill="none" stroke="#9a9a9a" stroke-width="1.5"/>
  <path d="M9.3 11.2 H15 M9.3 13.5 H14" stroke="#5a9ae0" stroke-width="1.2"/>
  <path d="M9.3 16 H17.5 M9.3 18.5 H15" stroke="#ccc" stroke-width="0.8"/>
  <path d="M18.5 24 L24 18.5" stroke="#5a9ae0" stroke-width="2.4"/>
  <circle cx="24.6" cy="17.9" r="1.4" fill="#d09a40"/>
 </g>
 <!-- selection handles -->
 <path d="M937.5 415 L949 404 H954 L965.5 415 Z" fill="#42a0fc"/>
 <path d="M951.5 407.5 V414.5 M948 411 H955" stroke="#fff" stroke-width="2"/>
 <path d="M842 474 L830 485 V489.5 L842 501 Z" fill="#42a0fc"/>
 <path d="M837.2 483.5 V490.5 M833.7 487 H840.7" stroke="#fff" stroke-width="2"/>
 <path d="M1061 474 L1073 485 V489.5 L1061 501 Z" fill="#42a0fc"/>
 <path d="M1065.8 483.5 V490.5 M1062.3 487 H1069.3" stroke="#fff" stroke-width="2"/>
 <!-- red plus -->
 <rect x="939" y="559.5" width="25" height="10.5" rx="1.5" fill="#d0021b"/>
 <path d="M951.5 561 V568.5 M947.8 564.8 H955.2" stroke="#fff" stroke-width="2"/>
 <!-- top-left pill -->
 <rect x="12" y="174.5" width="79" height="32.5" rx="16" fill="#f3f3f8"/>
 <g transform="translate(0,150)">
  <path d="M27 50 L28 45 L43 30.5 Q44.5 29.5 45.5 30.5 L46.2 31.2 Q47 32.2 46 33.2 L31 48 Z" fill="none" stroke="#36a84a" stroke-width="1.6" stroke-linejoin="round"/>
  <path d="M40 33.5 L43 36.5" stroke="#36a84a" stroke-width="1.2"/>
  <path d="M38.5 44.5 L41.5 48 L46 42.5" fill="none" stroke="#36a84a" stroke-width="2"/>
  <path d="M66.5 32 L57 48.5 Q56.5 49.8 58 49.8 H75 Q76.5 49.8 76 48.5 L66.5 32 Z" fill="#f6dcc0" stroke="#e08a3a" stroke-width="1.6" stroke-linejoin="round"/>
  <path d="M66.5 38.5 V44" stroke="#e08a3a" stroke-width="1.6"/>
  <circle cx="66.5" cy="46.6" r="0.9" fill="#e08a3a"/>
 </g>
 <!-- pin pill -->
 <rect x="1492" y="755" width="49" height="32" rx="16" fill="#f3f3f8"/>
 <path d="M1517 781 L1511.5 773.5 Q1509.5 770.5 1509.5 768 Q1509.5 760.7 1517 760.7 Q1524.5 760.7 1524.5 768 Q1524.5 770.5 1522.5 773.5 Z" fill="#b8b8b8" stroke="#8a8a8a" stroke-width="1"/>
 <circle cx="1517" cy="768.2" r="2.6" fill="#fff"/>
</svg>

<!-- right panel -->



<!-- RIGHT PANEL & SCROLLBARS -->
<svg class="a" style="left:0;top:0" width="1600" height="860" viewBox="0 0 1600 860">
 <rect x="1570" y="165" width="30" height="671" fill="#efefef"/>
<path d="M1570.5 179.0 H1591 L1598 186.0 V208.5 H1570.5 Z" fill="#e8e8e8" stroke="#d0d0d0" stroke-width="1"/>
<path d="M1591 179.0 L1598 186.0 H1591 Z" fill="#f8f8f8"/>
<path d="M1570.5 209.2 H1591 L1598 216.2 V238.7 H1570.5 Z" fill="#e8e8e8" stroke="#d0d0d0" stroke-width="1"/>
<path d="M1591 209.2 L1598 216.2 H1591 Z" fill="#f8f8f8"/>
<path d="M1570.5 239.4 H1591 L1598 246.4 V268.9 H1570.5 Z" fill="#e8e8e8" stroke="#d0d0d0" stroke-width="1"/>
<path d="M1591 239.4 L1598 246.4 H1591 Z" fill="#f8f8f8"/>
<path d="M1570.5 269.6 H1591 L1598 276.6 V299.1 H1570.5 Z" fill="#e8e8e8" stroke="#d0d0d0" stroke-width="1"/>
<path d="M1591 269.6 L1598 276.6 H1591 Z" fill="#f8f8f8"/>
<path d="M1570.5 299.8 H1591 L1598 306.8 V329.3 H1570.5 Z" fill="#e8e8e8" stroke="#d0d0d0" stroke-width="1"/>
<path d="M1591 299.8 L1598 306.8 H1591 Z" fill="#f8f8f8"/>
<path d="M1570.5 330.0 H1591 L1598 337.0 V359.5 H1570.5 Z" fill="#e8e8e8" stroke="#d0d0d0" stroke-width="1"/>
<path d="M1591 330.0 L1598 337.0 H1591 Z" fill="#f8f8f8"/>
<path d="M1570.5 360.2 H1591 L1598 367.2 V389.7 H1570.5 Z" fill="#e8e8e8" stroke="#d0d0d0" stroke-width="1"/>
<path d="M1591 360.2 L1598 367.2 H1591 Z" fill="#f8f8f8"/>
<path d="M1570.5 390.4 H1591 L1598 397.4 V419.9 H1570.5 Z" fill="#e8e8e8" stroke="#d0d0d0" stroke-width="1"/>
<path d="M1591 390.4 L1598 397.4 H1591 Z" fill="#f8f8f8"/>
<path d="M1570.5 420.6 H1591 L1598 427.6 V450.1 H1570.5 Z" fill="#e8e8e8" stroke="#d0d0d0" stroke-width="1"/>
<path d="M1591 420.6 L1598 427.6 H1591 Z" fill="#f8f8f8"/>
<path d="M1570.5 450.8 H1591 L1598 457.8 V480.3 H1570.5 Z" fill="#e8e8e8" stroke="#d0d0d0" stroke-width="1"/>
<path d="M1591 450.8 L1598 457.8 H1591 Z" fill="#f8f8f8"/>
<path d="M1570.5 481.0 H1591 L1598 488.0 V510.5 H1570.5 Z" fill="#e8e8e8" stroke="#d0d0d0" stroke-width="1"/>
<path d="M1591 481.0 L1598 488.0 H1591 Z" fill="#f8f8f8"/>
<path d="M1570.5 511.2 H1591 L1598 518.2 V540.7 H1570.5 Z" fill="#e8e8e8" stroke="#d0d0d0" stroke-width="1"/>
<path d="M1591 511.2 L1598 518.2 H1591 Z" fill="#f8f8f8"/>
 <!-- 1 map folder -->
 <g transform="translate(1575,185.5)">
  <path d="M1 2.5 Q1 1 2.5 1 H7 L9 3 H15 Q16 3 16 4 V15 H1 Z" fill="#fff" stroke="#555" stroke-width="1.1"/>
  <rect x="1" y="5.5" width="15" height="9.5" fill="#2c4fb0" stroke="#333" stroke-width="0.8"/>
  <path d="M6 7 V13.5 L10 10.2 Z" fill="#fff"/><rect x="10" y="7" width="2" height="6.5" fill="#bbb"/>
 </g>
 <!-- 2 markers -->
 <g transform="translate(1575,215.7)">
  <rect x="0.5" y="0.5" width="9" height="9.5" rx="1.5" fill="#d2353a"/>
  <circle cx="11" cy="11" r="5.5" fill="#6bb763" stroke="#e8e8e8" stroke-width="1"/>
  <path d="M8.3 11 L10.3 13 L13.5 9.5" fill="none" stroke="#fff" stroke-width="1.5"/>
 </g>
 <!-- 3 calendar -->
 <g transform="translate(1575,245.9)">
  <rect x="0.7" y="1.5" width="15" height="13.5" rx="1" fill="#fff" stroke="#777" stroke-width="1"/>
  <rect x="0.7" y="1.5" width="15" height="3.5" fill="#f0a040"/>
  <path d="M4 0 V3 M12 0 V3" stroke="#777" stroke-width="1.2"/>
  <path d="M3.5 9.5 L5.5 11.5 L9 8" fill="none" stroke="#4aa84a" stroke-width="1.3"/>
  <path d="M13 9.5 V16 M9.8 12.8 H16.2" stroke="#4aa84a" stroke-width="1.5"/>
 </g>
 <!-- 4 person -->
 <g transform="translate(1575,276.1)" fill="none" stroke="#8a8a8a" stroke-width="1.2">
  <circle cx="8" cy="3.5" r="2.8"/>
  <path d="M2 15.5 Q2 7 8 6.5 Q14 7 14 15.5 Z"/>
 </g>
 <!-- 5 topic tree -->
 <g transform="translate(1575,306.3)" fill="none" stroke="#7a7a7a" stroke-width="1.1">
  <rect x="0.5" y="5.5" width="6" height="4" rx="2"/>
  <rect x="10" y="1" width="5" height="3" rx="1.5"/><rect x="10" y="6" width="5" height="3" rx="1.5"/>
  <path d="M6.5 7.5 H8.5 V2.5 H10 M8.5 7.5 H10 M8.5 7.5 V12 H10"/>
  <path d="M13 10.5 V16 M10.2 13.2 H15.8" stroke="#4aa84a" stroke-width="1.4"/>
 </g>
 <!-- 6 image library -->
 <g transform="translate(1575,336.5)">
  <rect x="2.5" y="2.5" width="13" height="13" fill="#ddd" stroke="#777" stroke-width="0.8"/>
  <rect x="0.5" y="0.5" width="13" height="13" fill="#5b9be0" stroke="#666" stroke-width="0.8"/>
  <path d="M2 12 L6 7 L9 10 L12 12 Z" fill="#dde8f4"/>
  <circle cx="10" cy="3.5" r="1.3" fill="#f0c040"/>
  <path d="M13 10.5 V16 M10.2 13.2 H15.8" stroke="#4aa84a" stroke-width="1.4"/>
 </g>
 <!-- 7 search -->
 <g transform="translate(1575,366.7)" fill="none" stroke="#8a8a8a">
  <circle cx="7" cy="7" r="5.3" stroke-width="1.5"/>
  <path d="M10.8 10.8 L15 15" stroke-width="2.4"/>
 </g>
 <!-- 8 focus -->
 <g transform="translate(1575,396.9)">
  <rect x="0.5" y="0.5" width="16" height="15.5" rx="1.5" fill="#2f4fb0"/>
  <path d="M3 6 V3 H6 M11 3 H14 V6 M14 10.5 V13.5 H11 M6 13.5 H3 V10.5" fill="none" stroke="#fff" stroke-width="1.1"/>
  <path d="M6.5 5.5 V11 L10 8.2 Z M10 5.5 H11 V11 H10 Z" fill="#fff"/>
 </g>
 <!-- 9 slides -->
 <g transform="translate(1575,427.1)">
  <rect x="0.5" y="0.5" width="10" height="9" rx="1" fill="#fff" stroke="#888" stroke-width="1"/>
  <rect x="4" y="5" width="12.5" height="10.5" rx="1" fill="#fff" stroke="#4a8ad0" stroke-width="1.2"/>
  <path d="M7 10.5 H13.5" stroke="#4a8ad0" stroke-width="2"/>
 </g>
 <!-- 10 outlook -->
 <g transform="translate(1575,457.3)">
  <rect x="6" y="3" width="11" height="10" fill="#fff" stroke="#2a72c8" stroke-width="1"/>
  <path d="M6 3.5 L11.5 8.5 L17 3.5" fill="none" stroke="#2a72c8" stroke-width="1"/>
  <path d="M0 2 L10 0 V16 L0 14 Z" fill="#0a64c8"/>
  <ellipse cx="5" cy="8" rx="2.3" ry="3" fill="none" stroke="#fff" stroke-width="1.3"/>
 </g>
 <!-- 11 globe -->
 <g transform="translate(1575,487.5)" fill="none" stroke="#8a8a8a" stroke-width="1">
  <circle cx="8" cy="8" r="7" fill="#9a9a9a"/>
  <path d="M1 8 H15 M8 1 V15 M2 4.5 H14 M2 11.5 H14" stroke="#d8d8d8"/>
  <ellipse cx="8" cy="8" rx="3.5" ry="7" stroke="#d8d8d8"/>
 </g>
 <!-- 12 excel -->
 <g transform="translate(1575,517.7)">
  <rect x="7" y="2" width="10" height="12.5" fill="#fff" stroke="#5aa05a" stroke-width="0.8"/>
  <path d="M9 5 H16 M9 8 H16 M9 11 H16 M12 2 V14.5" stroke="#7aba7a" stroke-width="0.8"/>
  <path d="M0 2 L10 0 V16 L0 14 Z" fill="#1e7a3a"/>
  <path d="M2.8 5 L7 11.5 M7 5 L2.8 11.5" stroke="#fff" stroke-width="1.4"/>
 </g>

 <!-- vscroll -->
 <rect x="1550" y="168" width="17" height="627" fill="#efefef"/>
 <path d="M1554 178.5 L1558 174.5 L1562 178.5" fill="none" stroke="#555" stroke-width="1.3"/>
 <path d="M1554 784 L1558 788 L1562 784" fill="none" stroke="#555" stroke-width="1.3"/>
 <rect x="1550.5" y="462" width="15" height="47" fill="#cdcdcd"/>
 <!-- hscroll -->
 <rect x="3" y="795" width="1547" height="18" fill="#efefef"/>
 <path d="M13 799 L9 803 L13 807" fill="none" stroke="#555" stroke-width="1.3"/>
 <path d="M1539 799 L1543 803 L1539 807" fill="none" stroke="#555" stroke-width="1.3"/>
 <rect x="721" y="796" width="260" height="15" fill="#cdcdcd"/>
</svg>

<div class="a" style="left:1569px;top:165px;width:1px;height:671px;background:#9a9a9a"></div>
<!-- tab strip -->
<div class="a" style="left:0;top:814px;width:1569px;height:22px;background:#e6e6e6"></div>


<!-- TAB STRIP & STATUS -->
<svg class="a" style="left:0;top:0" width="1600" height="860" viewBox="0 0 1600 860">
 <rect x="0" y="813" width="1569" height="1" fill="#c8c8c8"/>
 <path d="M8 821 L4 825 L8 829 Z" fill="none" stroke="#9a9a9a" stroke-width="1"/>
 <path d="M1555 821 L1559 825 L1555 829 Z" fill="none" stroke="#9a9a9a" stroke-width="1"/>
 <path d="M15 814 L34 834.5 H289 Q290.5 834.5 290.5 833 V814 Z" fill="#fafafa" stroke="#d8d8d8" stroke-width="1"/>
 <!-- doc icon -->
 <path d="M43 815.5 H53 L56 818.5 V831 H43 Z" fill="#3a58b8"/>
 <path d="M46.5 821 V828.5 L50 824.8 Z" fill="#fff"/><rect x="50.3" y="821" width="2" height="7.5" fill="#aaa"/>
 <text x="67.5" y="827.8" font-family="Liberation Sans" font-weight="bold" font-size="11.2" fill="#2a6ad0">Organiser Journ... de Production*</text>
 <path d="M259.5 819 H264 M259.5 819 V823.5 M262 821.5 L266.5 826 M266.5 822.5 V826 H263" fill="none" stroke="#8a8a8a" stroke-width="1"/>
 <path d="M277 820.5 L284.5 828 M284.5 820.5 L277 828" stroke="#555" stroke-width="1.4"/>
 <!-- status icons -->
 <g fill="#7a7a7a">
  <path d="M1090 842 H1104 L1099 849 V855 L1095 853 V849 Z"/>
  <path d="M1100 850 L1105 855 M1105 850 L1100 855" stroke="#7a7a7a" stroke-width="1.3"/>
  <path d="M1112 842 H1127 L1121.5 849 V855 L1117.5 853 V849 Z"/>
  <path d="M1131 848 H1136 L1133.5 851 Z"/>
  <path d="M1143 842 H1157 L1152 849 V855 L1148 853 V849 Z"/>
  <path d="M1155 847 L1152 851 H1155 L1152 856" stroke="#7a7a7a" stroke-width="1.3" fill="none"/>
  <path d="M1162 848 H1167 L1164.5 851 Z"/>
  <path d="M1202 848 H1207 L1204.5 851 Z"/>
 </g>
 <circle cx="1190" cy="848.5" r="6.5" fill="none" stroke="#7a7a7a" stroke-width="1.3"/>
 <path d="M1190 845 V852 M1186.5 848.5 H1193.5" stroke="#7a7a7a" stroke-width="1.6"/>
 <path d="M1187 841 L1190 842 L1188 844.5" fill="none" stroke="#7a7a7a" stroke-width="1"/>
 <rect x="1213.5" y="841.5" width="15" height="14" rx="1.5" fill="none" stroke="#cfcfcf" stroke-width="1"/>
 <path d="M1217 845 L1225 853 M1225 845 L1217 853" stroke="#cfcfcf" stroke-width="1" stroke-dasharray="1.5 1.5"/>
 <rect x="1237.5" y="841.5" width="15" height="14" rx="1.5" fill="none" stroke="#7a7a7a" stroke-width="1.2"/>
 <path d="M1240.5 845 H1249 M1240.5 848 H1246 M1240.5 851 H1248" stroke="#7a7a7a" stroke-width="1"/>
 <rect x="1261.5" y="841.5" width="15" height="14" rx="1.5" fill="none" stroke="#7a7a7a" stroke-width="1.2"/>
 <rect x="1261.5" y="841.5" width="15" height="3.5" fill="#7a7a7a"/>
 <text x="1269" y="854" font-family="Liberation Sans" font-size="6.5" font-weight="bold" fill="#7a7a7a" text-anchor="middle">24</text>
 <rect x="1286.5" y="841.5" width="15" height="14" rx="1.5" fill="none" stroke="#7a7a7a" stroke-width="1.2"/>
 <circle cx="1292" cy="846.5" r="3" fill="#7a7a7a"/><circle cx="1296" cy="850.5" r="3" fill="none" stroke="#7a7a7a" stroke-width="1.3"/>
 <rect x="1311.5" y="841.5" width="15" height="14" rx="1.5" fill="none" stroke="#7a7a7a" stroke-width="1.2"/>
 <path d="M1314.5 850.5 L1320 845 H1323.5 V848.5 L1318 854 Z" fill="#7a7a7a"/>
 <rect x="1336.5" y="841.5" width="15" height="14" rx="1.5" fill="none" stroke="#7a7a7a" stroke-width="1.2"/>
 <path d="M1339.5 841.5 V855.5" stroke="#7a7a7a" stroke-width="1.5"/>
 <path d="M1342 845 H1348 M1343 848 H1349 M1344 851 H1350" stroke="#7a7a7a" stroke-width="1.1"/>
 <text x="1364" y="852.5" font-family="Liberation Sans" font-size="11" fill="#6a6a6a">125 %</text>
 <path d="M1408 848.5 H1416" stroke="#8a8a8a" stroke-width="1"/>
 <path d="M1428 848.5 H1518" stroke="#c0c0c0" stroke-width="1"/>
 <rect x="1471.5" y="841.5" width="4" height="13" fill="#f4f4f4" stroke="#9a9a9a" stroke-width="1"/>
 <path d="M1524 848.5 H1533 M1528.5 844 V853" stroke="#8a8a8a" stroke-width="1"/>
 <rect x="1542.5" y="841.5" width="14" height="13" fill="none" stroke="#7a7a7a" stroke-width="1.1"/>
 <path d="M1549.5 844 V853 M1545 848.5 H1554" stroke="#9a9a9a" stroke-width="0.9" stroke-dasharray="1.5 1"/>
 <rect x="1573" y="842" width="9" height="13" fill="#6a6a6a"/>
 <path d="M1583 855 V844 Q1583 842 1585 842 H1587 V845 H1586 V855 Z" fill="#6a6a6a"/>
 <path d="M1591 847 H1597 L1594 850 Z" fill="#555"/>
</svg>

<!-- status bar -->
<div class="a" style="left:0;top:836px;width:1600px;height:1px;background:#d6d6d6"></div>
<div class="a" style="left:0;top:859px;width:1600px;height:1px;background:#c4c4c4"></div>

<div class="a" style="left:1599px;top:34px;width:1px;height:826px;background:#c6c6c6"></div>
</body></html>
